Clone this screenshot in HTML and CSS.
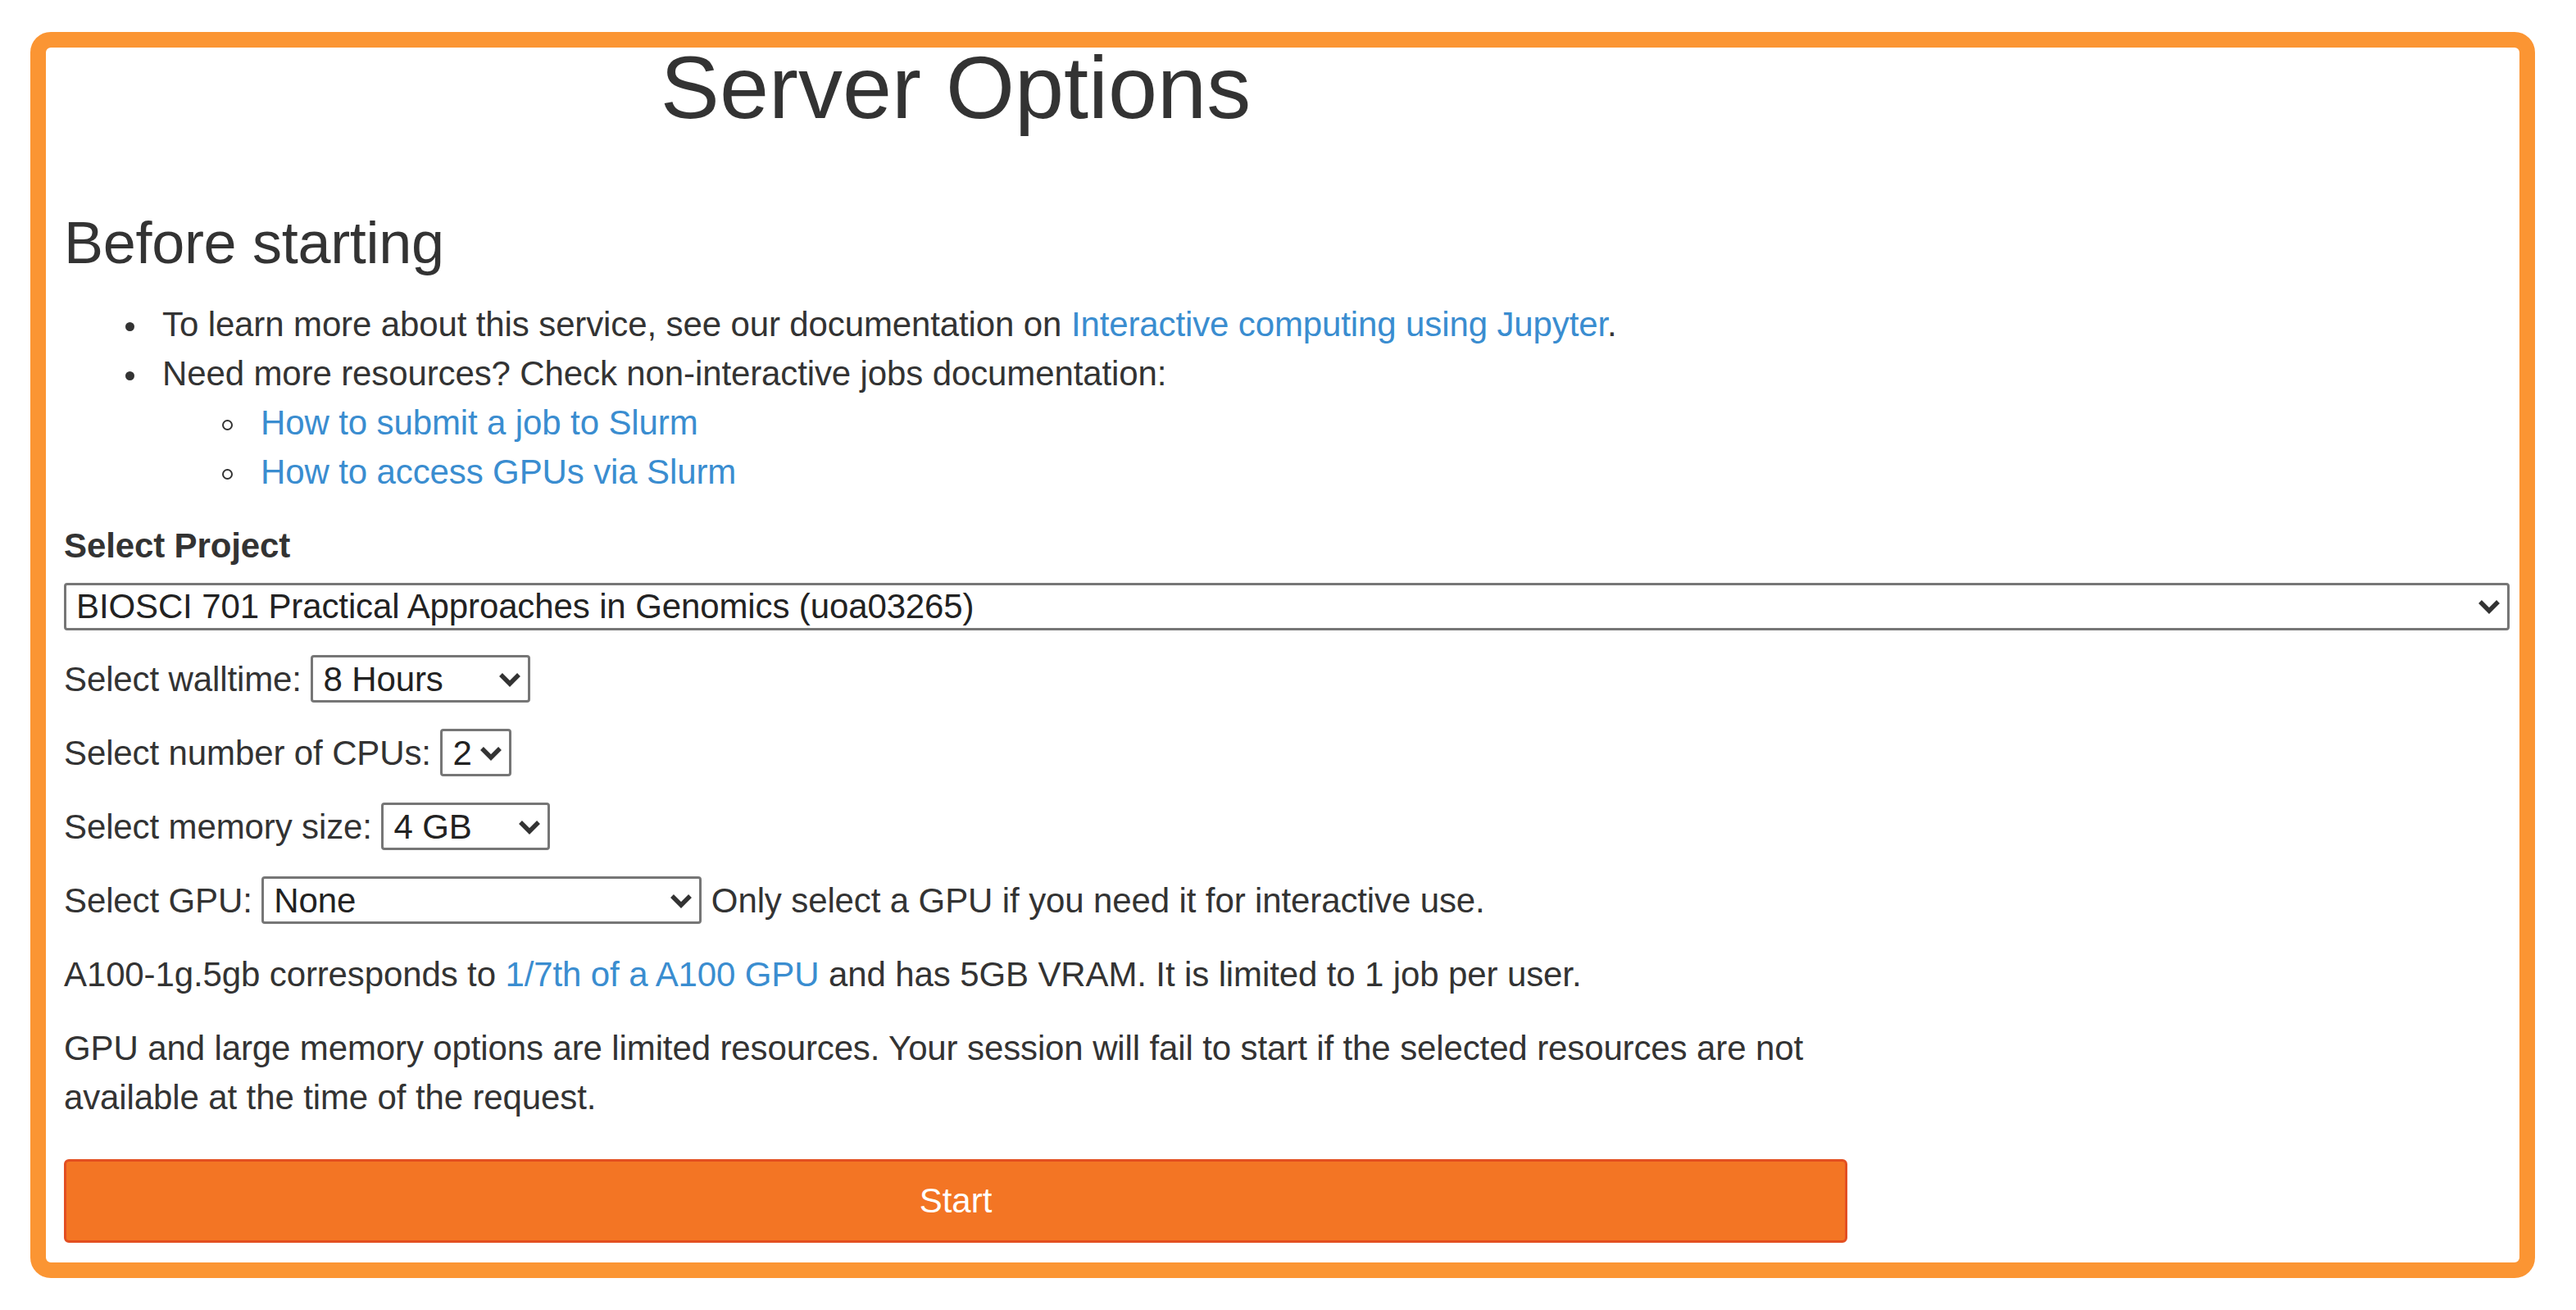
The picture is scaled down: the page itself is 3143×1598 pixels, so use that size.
FILE: index.html
```html
<!DOCTYPE html>
<html lang="en">
<head>
<meta charset="utf-8">
<title>Server Options</title>
<link rel="stylesheet" href="styles.css">
</head>
<body>
<div class="frame">
  <h1 class="title">Server Options</h1>
  <h3 class="sub">Before starting</h3>
  <ul class="info">
    <li>To learn more about this service, see our documentation on <a href="#">Interactive computing using Jupyter</a>.</li>
    <li>Need more resources? Check non-interactive jobs documentation:
      <ul class="nested">
        <li><a href="#">How to submit a job to Slurm</a></li>
        <li><a href="#">How to access GPUs via Slurm</a></li>
      </ul>
    </li>
  </ul>
  <form class="form" onsubmit="return false;">
    <label class="plabel" for="project">Select Project</label>
    <div class="selwrap block">
      <select id="project" class="sel sel-project">
        <option>BIOSCI 701 Practical Approaches in Genomics (uoa03265)</option>
      </select>
      <svg class="chev" viewBox="0 0 28 18" width="28" height="18"><path d="M3 3 L14 14 L25 3"/></svg>
    </div>
    <div class="row">Select walltime: <span class="selwrap"><select class="sel sel-wall"><option>8 Hours</option></select><svg class="chev" viewBox="0 0 28 18" width="28" height="18"><path d="M3 3 L14 14 L25 3"/></svg></span></div>
    <div class="row">Select number of CPUs: <span class="selwrap"><select class="sel sel-cpu"><option>2</option></select><svg class="chev" viewBox="0 0 28 18" width="28" height="18"><path d="M3 3 L14 14 L25 3"/></svg></span></div>
    <div class="row">Select memory size: <span class="selwrap"><select class="sel sel-mem"><option>4 GB</option></select><svg class="chev" viewBox="0 0 28 18" width="28" height="18"><path d="M3 3 L14 14 L25 3"/></svg></span></div>
    <div class="row">Select GPU: <span class="selwrap"><select class="sel sel-gpu"><option>None</option></select><svg class="chev" viewBox="0 0 28 18" width="28" height="18"><path d="M3 3 L14 14 L25 3"/></svg></span> Only select a GPU if you need it for interactive use.</div>
    <p class="note">A100-1g.5gb corresponds to <a href="#">1/7th of a A100 GPU</a> and has 5GB VRAM. It is limited to 1 job per user.</p>
    <p class="note">GPU and large memory options are limited resources. Your session will fail to start if the selected resources are not available at the time of the request.</p>
    <button type="submit" class="start">Start</button>
  </form>
</div>
</body>
</html>
```

FILE: styles.css
```css
html, body {
  margin: 0;
  background: #ffffff;
}

body {
  padding: 39px 50px 23px 37px;
  font-family: "Liberation Sans", Arial, Helvetica, sans-serif;
  font-size: 42px;
  line-height: 60px;
  color: #333333;
  letter-spacing: -0.12px;
}

.frame {
  border: 19px solid #fb9533;
  border-radius: 25px;
  padding: 0 12px 24px 22px;
}

.title {
  width: 2176px;
  margin: -10px 0 0;
  text-align: center;
  font-size: 108px;
  font-weight: 500;
  line-height: 1.1;
  color: #333333;
  letter-spacing: normal;
}

.sub {
  margin: 90px 0 30px;
  font-size: 72px;
  font-weight: 500;
  line-height: 1.1;
  color: #333333;
  letter-spacing: -0.3px;
}

a {
  color: #3a8dd0;
  text-decoration: none;
}

.info {
  margin: 0 0 30px;
  padding-left: 120px;
  max-width: 2056px;
  list-style: none;
}

.info > li,
.nested > li {
  position: relative;
}

.info > li::before {
  content: "";
  position: absolute;
  left: -45px;
  top: 27px;
  width: 11px;
  height: 11px;
  border-radius: 50%;
  background: #333333;
}

.nested {
  margin: 0;
  padding-left: 120px;
  list-style: none;
}

.nested > li::before {
  content: "";
  position: absolute;
  left: -47px;
  top: 26px;
  box-sizing: border-box;
  width: 13px;
  height: 13px;
  border-radius: 50%;
  border: 2.5px solid #333333;
  background: transparent;
}

.form {
  margin: 0;
}

.plabel {
  display: block;
  margin-bottom: 15px;
  font-weight: bold;
}

.selwrap {
  position: relative;
  display: inline-block;
}

.selwrap.block {
  display: block;
  margin-bottom: 30px;
}

.sel {
  -webkit-appearance: none;
  appearance: none;
  box-sizing: border-box;
  height: 58px;
  margin: 0;
  padding: 0 12px;
  font-family: inherit;
  font-size: 42px;
  letter-spacing: -0.12px;
  line-height: normal;
  color: #222222;
  background: #ffffff;
  border: 3px solid #767676;
  border-radius: 4px;
  vertical-align: baseline;
}

.sel-project { width: 100%; display: block; }
.sel-wall { width: 268px; }
.sel-cpu { width: 87px; }
.sel-mem { width: 206px; }
.sel-gpu { width: 537px; }

.chev {
  position: absolute;
  right: 11px;
  top: 50%;
  transform: translateY(-50%);
  pointer-events: none;
}

.chev path {
  fill: none;
  stroke: #333333;
  stroke-width: 5.5;
  stroke-linejoin: miter;
  stroke-linecap: butt;
}

.row {
  height: 60px;
  margin-bottom: 30px;
  white-space: nowrap;
}

.note {
  width: 2176px;
  margin: 0 0 30px;
}

.start {
  display: block;
  box-sizing: border-box;
  width: 2176px;
  height: 102px;
  margin: 45px 0 0;
  padding: 18px 36px;
  font-family: inherit;
  font-size: 42px;
  line-height: 60px;
  color: #ffffff;
  background: #f37524;
  border: 3px solid #e34f21;
  border-radius: 6px;
  text-align: center;
}
```
